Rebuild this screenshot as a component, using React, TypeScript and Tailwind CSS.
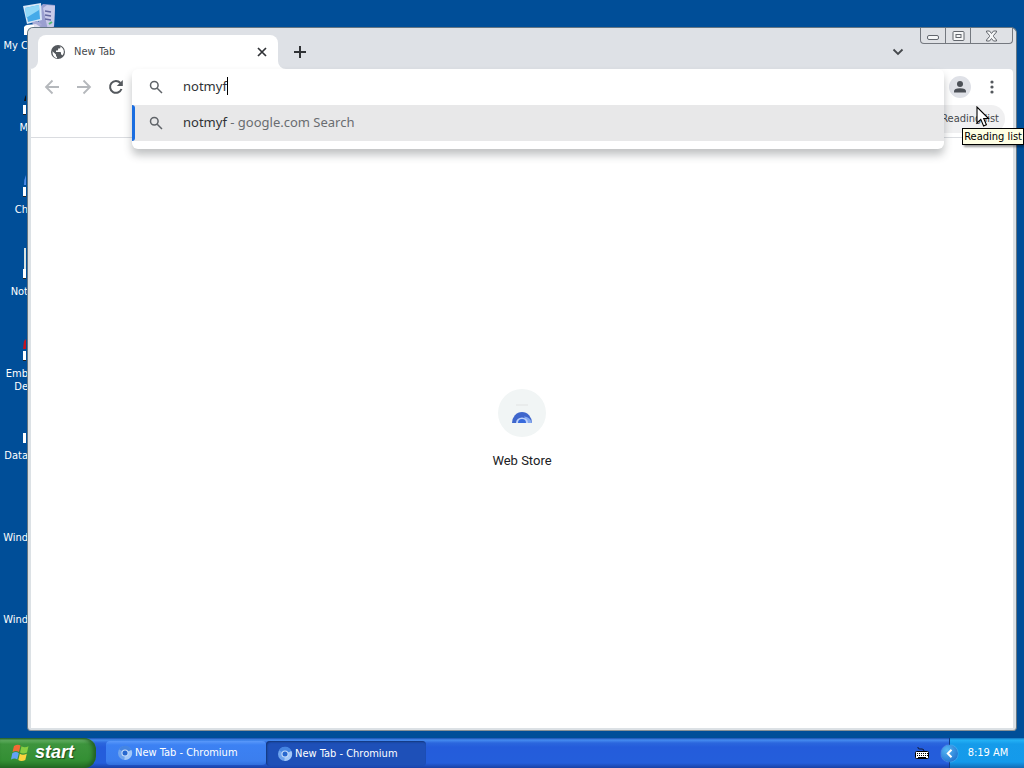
import type { ReactNode } from "react";

const SYS = "font-['DejaVu_Sans_Condensed','DejaVu_Sans',sans-serif]";

function ChromiumLogo() {
  return (
    <svg width="16" height="16" viewBox="0 0 16 16" className="shrink-0" aria-hidden="true">
      <circle cx="8" cy="8" r="7" fill="#6fa4ee" />
      <path d="M8 8 2 4.2A7 7 0 0 1 14.4 5Z" fill="#4585e2" />
      <path d="M8 8 14.4 5A7 7 0 0 1 7.4 15Z" fill="#a3c8f8" />
      <circle cx="8" cy="8" r="3.6" fill="#c5dcfa" />
      <circle cx="8" cy="8" r="2.5" fill="#2767cf" />
    </svg>
  );
}

function SearchIcon() {
  return (
    <svg width="16" height="16" viewBox="0 0 16 16" className="shrink-0" fill="none" stroke="#5f6368" strokeWidth="1.5" aria-hidden="true">
      <circle cx="6.3" cy="6.3" r="3.8" />
      <path d="m9.2 9.2 4.8 4.8" />
    </svg>
  );
}

function ShortcutSliver({ kind }: { kind: string }) {
  return (
    <svg width="4" height="34" viewBox="0 0 4 34" aria-hidden="true">
      {kind === "mail" && <path d="M4 12v6H2l1-4Z" fill="#111" />}
      {kind === "chrome" && <path d="M4 10v10H2q0-6 2-10Z" fill="#4d8ce9" />}
      {kind === "note" && <path d="M2 1h2v22H2Z" fill="#d9e3e2" />}
      {kind === "red" && <path d="M4 10v10H1l1-8Z" fill="#c01422" />}
      <path d="M1 22h3v10H1Z" fill="#fff" />
      {kind !== "plain" && <path d="M1 31h3v1H1Z" fill="#222" />}
    </svg>
  );
}

function ComputerIcon() {
  return (
    <svg width="34" height="34" viewBox="0 0 34 34" aria-hidden="true">
      <path d="m17 7 4-4 12 1-1 22-7 4-8-3Z" fill="#9a9fd0" />
      <path d="m21 7 4-3 8 1-1 20-6 4Z" fill="#c8cae9" />
      <path d="m23 10 6 1M23 14l6 1M23 18l6 1" stroke="#6267a0" strokeWidth="1.3" />
      <path d="m27 23 3-2" stroke="#55b875" strokeWidth="2" />
      <path d="m1 5 18-3 1 17-15 4Z" fill="#d8e7f7" />
      <path d="m3 7 14-3 1 14-12 3Z" fill="#45aae9" />
      <path d="m3 7 14-3v5L4 17Z" fill="#91d7f8" />
      <path d="m10 21 6-1 4 4-8 3Z" fill="#a8abd6" />
      <path d="m4 24 10-1 6 4-12 2Z" fill="#e0e0f0" />
      <path d="M2 26q1-2 4-2h6v10H2Z" fill="#fff" />
    </svg>
  );
}

const shortcuts = [
  { kind: "computer", lines: ["My C"] },
  { kind: "mail", lines: ["M"] },
  { kind: "chrome", lines: ["Ch"] },
  { kind: "note", lines: ["Not"] },
  { kind: "red", lines: ["Emb", "De"] },
  { kind: "plain", lines: ["Data"] },
  { kind: "none", lines: ["Wind"] },
  { kind: "none", lines: ["Wind"] },
];

function DesktopShortcuts() {
  return (
    <ul className="flex w-7 flex-col pt-px text-[11px] leading-[13px] text-white">
      {shortcuts.map((s, i) => (
        <li key={i} className="flex h-[82px] flex-col items-end gap-1">
          <div className="flex h-[34px] w-full pl-[22px]">
            {s.kind === "computer" ? (
              <span className="shrink-0"><ComputerIcon /></span>
            ) : (
              s.kind !== "none" && <ShortcutSliver kind={s.kind} />
            )}
          </div>
          <span className="text-right whitespace-nowrap">
            {s.lines.map((l) => (
              <span key={l} className="block">{l}</span>
            ))}
          </span>
        </li>
      ))}
    </ul>
  );
}

function CaptionButtons() {
  return (
    <div className="mr-[3px] flex h-4 self-start rounded-b-[4px] border border-t-0 border-[#74787f] bg-[#dfe1e5]">
      <button aria-label="Minimize" className="flex w-[25px] items-center justify-center border-r border-[#74787f]">
        <svg width="13" height="13" fill="none" stroke="#62666d"><rect x=".5" y="6.500" width="11" height="4" rx="1.500" fill="#f5f6f7" /></svg>
      </button>
      <button aria-label="Maximize" className="flex w-[25px] items-center justify-center border-r border-[#74787f]">
        <svg width="13" height="12" fill="none" stroke="#62666d"><rect x="1" y="1.500" width="11" height="9" rx="1" fill="#f5f6f7" /><rect x="4" y="4.500" width="5" height="3" /></svg>
      </button>
      <button aria-label="Close" className="flex w-[41px] items-center justify-center">
        <svg width="13" height="12" viewBox="0 0 13 12" fill="#f5f6f7" stroke="#62666d"><path d="M1.500 1h3l2 2.500 2-2.500h3v1L8.500 5.500v1l3 3.500v1h-3l-2-2.500-2 2.500h-3v-1l3-3.500v-1L1.500 2Z" /></svg>
      </button>
    </div>
  );
}

function TabStrip() {
  return (
    <div className="flex h-[41px] items-end rounded-t-md bg-[#dee1e6] pl-[10px]">
      <div className="relative flex h-[34px] w-[240px] items-center rounded-t-lg bg-white pr-[10px] pl-3">
        <svg width="8" height="8" className="absolute bottom-0 -left-2" aria-hidden="true"><path d="M8 0v8H0a8 8 0 0 0 8-8Z" fill="#fff" /></svg>
        <svg width="8" height="8" className="absolute -right-2 bottom-0" aria-hidden="true"><path d="M0 0v8h8a8 8 0 0 1-8-8Z" fill="#fff" /></svg>
        <svg width="16" height="16" viewBox="0 0 16 16" aria-hidden="true">
          <circle cx="8" cy="8" r="7" fill="#54585d" />
          <path d="M2.500 7.200 6 10.500v1.200q0 1 1 1v1.600Q2.200 13 2.500 7.200ZM9.500 2.200q4.800 1.700 4.300 6.500l-1.300 2.800q-.4-1.100-1.500-1V8.800q0-.8-.8-.8H6V6.500h1.400q.7 0 .7-.7V4.500h1.200q1.300 0 1.200-1.200Z" fill="#fff" />
        </svg>
        <span className="flex-1 pl-2 text-[11px] text-[#45484c]">New Tab</span>
        <button aria-label="Close tab" className="flex size-3 items-center justify-center">
          <svg width="10" height="10" stroke="#303236" strokeWidth="1.700"><path d="m1 1 8 8m0-8L1 9" /></svg>
        </button>
      </div>
      <button aria-label="New tab" className="ml-3 flex h-[34px] w-5 items-center justify-center">
        <svg width="12" height="12" stroke="#303236" strokeWidth="2"><path d="M6 0v12M0 6h12" /></svg>
      </button>
      <div className="flex-1" />
      <button aria-label="Search tabs" className="mr-3 flex h-[34px] w-5 items-center justify-center">
        <svg width="12" height="8" fill="none" stroke="#45484c" strokeWidth="1.800"><path d="m1.500 1.500 4.500 4.500 4.500-4.500" /></svg>
      </button>
      <CaptionButtons />
    </div>
  );
}

function ToolButton({ label, children }: { label: string; children: ReactNode }) {
  return (
    <button aria-label={label} className="flex h-9 w-8 items-center justify-center">{children}</button>
  );
}

function Omnibox() {
  return (
    <div className="relative flex-1">
      <div className="absolute inset-x-0 top-0 z-10 flex flex-col rounded-md bg-white pb-2 text-[13px] shadow-[0_6px_9px_rgba(60,64,67,0.32)]">
        <label className="relative flex h-9 items-center pl-4">
          <SearchIcon />
          <input aria-label="Address and search bar" defaultValue="notmyf" className="min-w-0 flex-1 bg-transparent pl-[19px] text-[#303236] outline-none" />
          <span className="absolute top-2 left-[95px] h-[18px] w-px bg-black" />
        </label>
        <button className="relative flex h-9 items-center bg-[#e8e8e9] pl-4 text-left">
          <span className="absolute inset-y-0 left-0 w-[3px] rounded-r-sm bg-[#1a6de0]" />
          <SearchIcon />
          <span className="pl-[19px] text-[#303236]">notmyf<span className="text-[#6a6d71]"> - google.com Search</span></span>
        </button>
      </div>
    </div>
  );
}

function Toolbar() {
  return (
    <div className="border-b border-[#dadce0]">
      <div className="flex h-9 px-[5px] font-['Noto_Sans',sans-serif]">
        <ToolButton label="Back">
          <svg width="16" height="16" fill="none" stroke="#b5b8bc" strokeWidth="1.800"><path d="M15 8H2m6.500-6.500L2 8l6.500 6.500" /></svg>
        </ToolButton>
        <ToolButton label="Forward">
          <svg width="16" height="16" fill="none" stroke="#b5b8bc" strokeWidth="1.800"><path d="M1 8h13M7.500 1.500 14 8l-6.500 6.500" /></svg>
        </ToolButton>
        <ToolButton label="Reload">
          <svg width="16" height="16" fill="none" stroke="#54585d" strokeWidth="2"><path d="M13.500 10A5.900 5.900 0 1 1 12.400 4" /><path d="M14.800 1v6H8.800Z" fill="#54585d" stroke="none" /></svg>
        </ToolButton>
        <Omnibox />
        <ToolButton label="Profile">
          <svg width="22" height="22" aria-hidden="true"><circle cx="11" cy="11" r="11" fill="#dfe1e7" /><circle cx="11" cy="8" r="3" fill="#4c5057" /><path d="M5 16.500v-1.200q0-3 6-3t6 3v1.200Z" fill="#4c5057" /></svg>
        </ToolButton>
        <ToolButton label="Menu">
          <svg width="4" height="16" fill="#54585d"><circle cx="2" cy="3" r="1.600" /><circle cx="2" cy="8" r="1.600" /><circle cx="2" cy="13" r="1.600" /></svg>
        </ToolButton>
      </div>
      <div className="flex h-8 justify-end pr-2">
        <button className="relative h-7 rounded-full bg-[#f0f0f1] pr-[6px] pl-9 text-[11px] text-[#45484c]">
          Reading list
          <span role="tooltip" className="absolute top-[23px] left-[57px] z-20 border border-black bg-[#ffffe4] px-px text-[11px] leading-[15px] whitespace-nowrap text-black shadow-[2px_2px_2px_rgba(0,0,0,0.4)]">
            Reading list
          </span>
          <svg width="14" height="22" viewBox="0 0 14 22" className="absolute top-px left-[71px] z-30" aria-hidden="true">
            <path d="M1 1v16l3.800-3.600L7.600 20l2.800-1.200L7.700 12.500H12.500Z" fill="#fff" stroke="#000" strokeWidth="1.100" />
          </svg>
        </button>
      </div>
    </div>
  );
}

function BrowserWindow() {
  return (
    <section aria-label="Chromium" className="absolute top-[27px] right-[7px] bottom-[7px] left-[27px] flex flex-col rounded-t-md rounded-b-sm border border-[#657683] border-b-[#8a9297] bg-[#dce1e5] px-[3px] pb-[2px]">
      <div className="-mx-[3px]"><TabStrip /></div>
      <div className="flex flex-1 flex-col rounded-tr-sm bg-white">
        <Toolbar />
        <main className="flex flex-1 items-center justify-center">
          <a href="#web-store" className="-mt-2 flex flex-col items-center gap-4">
            <svg width="48" height="48" aria-hidden="true">
              <circle cx="24" cy="24" r="24" fill="#f1f5f5" />
              <path d="M18 16h12" stroke="#e9ecec" strokeWidth="2" />
              <path d="M14 34a10 11 0 0 1 20 0Z" fill="#3f66cc" />
              <path d="M26 27.500q6 0 8 6.500h-5Z" fill="#86a9ef" />
              <path d="M18 34a6 5.500 0 0 1 12 0Z" fill="#bed2fb" />
              <path d="M20 34a4 4 0 0 1 8 0Z" fill="#396bdc" />
            </svg>
            <span className="font-[Roboto,sans-serif] text-[13px] leading-4 text-[#202124]">Web Store</span>
          </a>
        </main>
      </div>
    </section>
  );
}

function WindowsFlag() {
  return (
    <svg width="19" height="18" viewBox="0 0 19 18" aria-hidden="true">
      <path d="M3 2q4-2.500 6.500-.4L8 8Q5 6 1.500 8Z" fill="#f36a35" />
      <path d="M10.500 2.200q3 2 7 0L16 8.500q-4 2-7 0Z" fill="#86ce42" />
      <path d="M1.300 9.200Q5 7 7.800 9.200L6.300 15.500Q3.500 13.500 0 15.500Z" fill="#63a2f5" />
      <path d="M8.800 9.700q3 2 7 0l-1.500 6.300q-4 2-7 0Z" fill="#fbd33e" />
    </svg>
  );
}

function Taskbar() {
  return (
    <footer className="flex h-[30px] shrink-0 bg-[linear-gradient(#1c4fae_0,#458cf0_2px,#2b66dd_5px,#245cdb_9px,#245edb_25px,#1941a5_30px)] text-[11px] text-white">
      <button className="flex w-24 items-center gap-[5px] rounded-r-xl bg-[linear-gradient(#275f27_0,#66b266_2px,#3d943d_6px,#348f34_22px,#246f24_30px)] pl-[11px] shadow-[inset_-3px_0_4px_#225e22]">
        <WindowsFlag />
        <span className="pb-[2px] font-['Liberation_Sans',sans-serif] text-lg leading-none font-bold italic [text-shadow:1px_1px_1px_#1d4a1d]">start</span>
      </button>
      <nav aria-label="Open windows" className="flex flex-1 pt-[3px] pl-[10px]">
        <button className="flex h-6 w-40 items-center gap-[2px] rounded-sm bg-[linear-gradient(#5a99fa_0,#3c81f3_4px,#3b7eee_20px,#306fdd_24px)] pl-[11px]">
          <ChromiumLogo />
          <span>New Tab - Chromium</span>
        </button>
        <button className="flex h-[25px] w-40 items-center gap-[2px] rounded-sm bg-[#1e50b8] pt-px pl-[11px] shadow-[inset_1px_1px_2px_#123578]">
          <ChromiumLogo />
          <span>New Tab - Chromium</span>
        </button>
      </nav>
      <button aria-label="Keyboard layout" className="flex items-center pr-[19px]">
        <svg width="16" height="14" aria-hidden="true">
          <path d="M4 1v1q0 1 2 1h2q2 0 2 2" fill="none" stroke="#101830" />
          <rect x="1.500" y="5.500" width="13" height="7" rx="1" fill="#fff" stroke="#000" />
          <path d="M3 7.500h11M3 9.500h11" stroke="#000" strokeDasharray="1 1" />
          <path d="M4 11.500h8" stroke="#000" />
        </svg>
      </button>
      <div className="relative flex w-[75px] items-center justify-center border-l border-[#103c85] bg-[linear-gradient(#1675bd_0,#23b1f5_2px,#159bea_6px,#149aeb_24px,#126bb5_30px)] pl-[2px]">
        <button aria-label="Show hidden icons" className="absolute top-[7px] -left-[9px] flex size-[17px] items-center justify-center rounded-full bg-[radial-gradient(circle_at_35%_30%,#55b7f5,#1563c6)] shadow-[0_0_1px_#d5efff]">
          <svg width="7" height="9" fill="none" stroke="#fff" strokeWidth="2"><path d="M5.500.8 1.800 4.500l3.700 3.700" /></svg>
        </button>
        <time>8:19 AM</time>
      </div>
    </footer>
  );
}

export default function App() {
  return (
    <div className={`${SYS} flex h-screen flex-col overflow-hidden bg-[#004e98]`}>
      <div className="relative min-h-0 flex-1">
        <DesktopShortcuts />
        <BrowserWindow />
      </div>
      <Taskbar />
    </div>
  );
}
